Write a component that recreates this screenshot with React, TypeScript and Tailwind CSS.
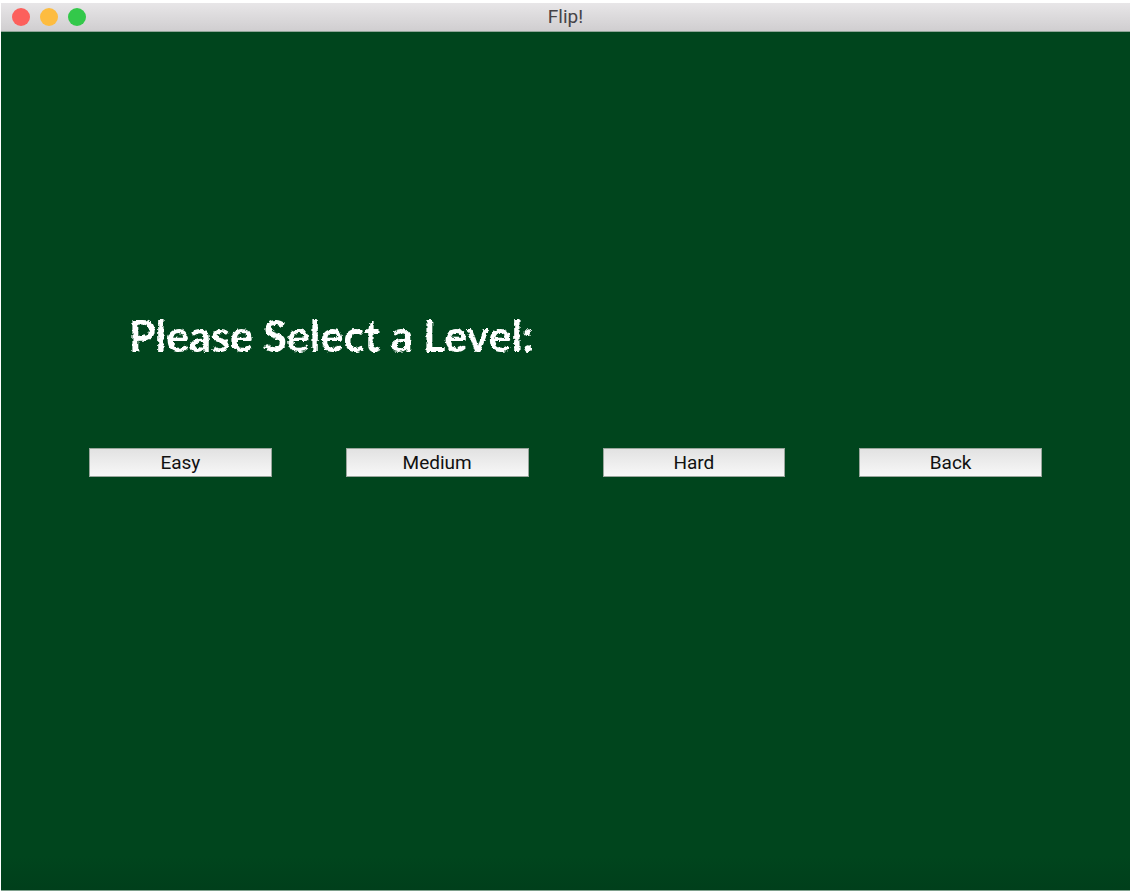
const levels = ['Easy', 'Medium', 'Hard', 'Back'];

const windowControls = [
  { label: 'Close', color: 'bg-[#fc605c]' },
  { label: 'Minimize', color: 'bg-[#fdbc40]' },
  { label: 'Zoom', color: 'bg-[#33c84a]' },
];

function TitleBar() {
  return (
    <header className="grid h-[29px] grid-cols-[1fr_auto_1fr] items-center border-b border-[#8fa597] bg-linear-to-b from-[#e8e6e8] to-[#d0ced0] px-[11px]">
      <div className="flex gap-[10px]">
        {windowControls.map((control) => (
          <button
            key={control.label}
            type="button"
            aria-label={control.label}
            className={`size-[18px] rounded-full ${control.color}`}
          />
        ))}
      </div>
      <h1 className="text-[19px] leading-6 text-[#454347]">Flip!</h1>
    </header>
  );
}

function ChalkFilter() {
  return (
    <svg width="0" height="0" className="absolute" aria-hidden="true">
      <filter id="chalk" x="-5%" y="-10%" width="110%" height="120%">
        <feTurbulence type="fractalNoise" baseFrequency="0.3" numOctaves="2" seed="4" result="noise" />
        <feDisplacementMap
          in="SourceGraphic"
          in2="noise"
          scale="4"
          xChannelSelector="R"
          yChannelSelector="G"
        />
      </filter>
    </svg>
  );
}

export default function App() {
  return (
    <div className="min-h-screen bg-white pt-[3px] pr-[6px] pb-[3px] pl-px font-['Roboto','Liberation_Sans',sans-serif]">
      <div className="flex min-h-[calc(100vh-6px)] flex-col bg-[#00451d]">
        <TitleBar />
        <main className="flex grow flex-col border-b border-[#7fa18d] bg-linear-to-b from-[#00451d] from-96% to-[#003f1b] px-[88px] pt-[280px]">
          <ChalkFilter />
          <h2 className="ml-10 text-[43px] leading-12 font-bold whitespace-nowrap text-white filter-[url(#chalk)] font-['Lato',sans-serif]">
            Please Select a Level:
          </h2>
          <div className="mt-22 grid grid-cols-4 gap-[74px]">
            {levels.map((level) => (
              <button
                key={level}
                type="button"
                className="h-[29px] border border-[#9aa69d] bg-linear-to-b from-[#e2e2e2] to-[#f8f8f8] text-[19px] leading-6 text-[#111111]"
              >
                {level}
              </button>
            ))}
          </div>
        </main>
      </div>
    </div>
  );
}
